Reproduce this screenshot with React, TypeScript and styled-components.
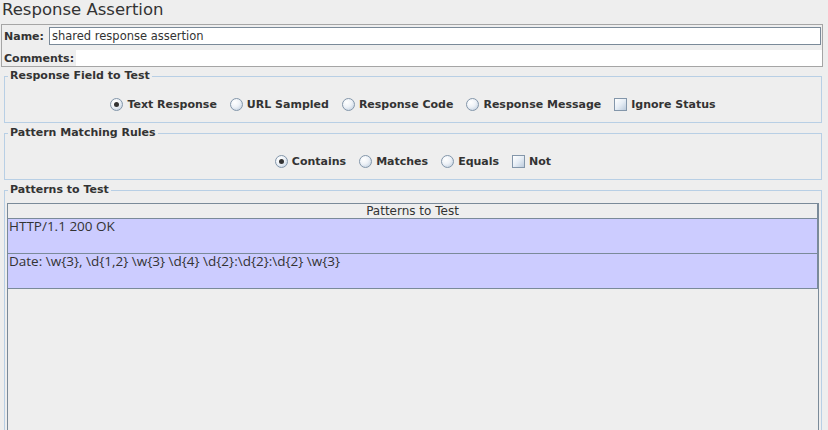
import React from 'react';
import styled, { createGlobalStyle } from 'styled-components';

// Metal-ish look: grey panel, blue-grey lines, bold dialog labels
const GlobalStyle = createGlobalStyle`
  html, body {
    margin: 0;
    padding: 0;
    background: #eeeeee;
  }
  body {
    font-family: "DejaVu Sans", "Liberation Sans", sans-serif;
    color: #333333;
  }
`;

const Page = styled.div`
  width: 828px;
  height: 430px;
  overflow: hidden;
  background: #eeeeee;
  display: flex;
  flex-direction: column;
`;

const Title = styled.h1`
  margin: 0;
  padding-left: 2px;
  height: 24px;
  line-height: 20px;
  font-size: 16.5px;
  font-weight: normal;
  color: #333333;
  flex-shrink: 0;
`;

const InfoBox = styled.div`
  margin: 0 5px 0 1px;
  border: 1px solid #a5a5a5;
  padding-top: 1px;
  display: flex;
  flex-direction: column;
  gap: 4px;
  flex-shrink: 0;
`;

const InfoRow = styled.div<{ $h: number }>`
  display: flex;
  align-items: center;
  height: ${(p) => p.$h}px;
`;

const FieldLabel = styled.span<{ $gap: number }>`
  padding-left: 2px;
  margin-right: ${(p) => p.$gap}px;
  font-size: 11px;
  font-weight: bold;
  color: #333333;
  white-space: nowrap;
`;

const TextInput = styled.div`
  flex: 1;
  height: 16px;
  margin-right: 1px;
  border: 1px solid #7a8a99;
  background: #ffffff;
  padding-left: 2px;
  font-size: 11.5px;
  line-height: 16px;
  color: #333333;
`;

const TextArea = styled.div`
  flex: 1;
  height: 16px;
  background: #ffffff;
`;

const Group = styled.fieldset<{ $top: number; $h?: number }>`
  margin: ${(p) => p.$top}px 6px 0 4px;
  padding: 0;
  border: 1px solid #b8cfe5;
  min-width: 0;
  flex-shrink: 0;
  ${(p) => (p.$h ? `height: ${p.$h}px;` : '')}
`;

const Legend = styled.legend`
  margin-left: 3px;
  padding: 0 2px;
  font-size: 11px;
  font-weight: bold;
  line-height: 14px;
  color: #333333;
`;

const OptionRow = styled.div`
  display: flex;
  justify-content: center;
  align-items: center;
  gap: 13px;
  height: 18px;
  padding: 12px 0 9px;
`;

const Option = styled.label`
  display: inline-flex;
  align-items: center;
  gap: 4px;
  font-size: 11px;
  font-weight: bold;
  color: #333333;
  white-space: nowrap;
`;

const Radio = styled.span<{ $on?: boolean }>`
  width: 11px;
  height: 11px;
  border-radius: 50%;
  border: 1px solid #8396aa;
  background: radial-gradient(circle at 35% 30%, #ffffff 0%, #eef2f7 45%, #b9c9db 100%);
  display: flex;
  align-items: center;
  justify-content: center;
  flex-shrink: 0;

  &::after {
    content: '';
    display: ${(p) => (p.$on ? 'block' : 'none')};
    width: 5px;
    height: 5px;
    border-radius: 50%;
    background: #333333;
  }
`;

const Check = styled.span`
  width: 11px;
  height: 11px;
  border: 1px solid #8396aa;
  background: linear-gradient(135deg, #ffffff 0%, #e6edf5 50%, #bccbdc 100%);
  flex-shrink: 0;
`;

const Pane = styled.div`
  margin: 6px 2px 0 2px;
  height: 260px;
  border: 1px solid #7a8a99;
  background: #eeeeee;
`;

const Grid = styled.div`
  border-right: 1px solid #7a8a99;
`;

const HeaderCell = styled.div`
  height: 14px;
  border-bottom: 1px solid #7a8a99;
  text-align: center;
  font-size: 12px;
  line-height: 14px;
  color: #333333;
`;

// row text is narrower than DejaVu in the braces, Open Sans fits the widths better
const Row = styled.div`
  height: 34px;
  border-bottom: 1px solid #7a8a99;
  background: #ccccff;
  padding-left: 1px;
  font-family: "Open Sans", "DejaVu Sans", sans-serif;
  font-size: 13.5px;
  line-height: 15px;
  color: #333333;
  white-space: pre;
`;

const fieldOptions = [
  { label: 'Text Response', on: true },
  { label: 'URL Sampled' },
  { label: 'Response Code' },
  { label: 'Response Message' },
];

const ruleOptions = [{ label: 'Contains', on: true }, { label: 'Matches' }, { label: 'Equals' }];

const patterns = ['HTTP/1.1 200 OK', 'Date: \\w{3}, \\d{1,2} \\w{3} \\d{4} \\d{2}:\\d{2}:\\d{2} \\w{3}'];

const App: React.FC = () => {
  return (
    <Page>
      <GlobalStyle />
      <Title>Response Assertion</Title>

      <InfoBox>
        <InfoRow $h={20}>
          <FieldLabel $gap={5}>Name:</FieldLabel>
          <TextInput>shared response assertion</TextInput>
        </InfoRow>
        <InfoRow $h={16}>
          <FieldLabel $gap={2}>Comments:</FieldLabel>
          <TextArea />
        </InfoRow>
      </InfoBox>

      <Group $top={2}>
        <Legend>Response Field to Test</Legend>
        <OptionRow>
          {fieldOptions.map((o) => (
            <Option key={o.label}>
              <Radio $on={o.on} />
              {o.label}
            </Option>
          ))}
          <Option>
            <Check />
            Ignore Status
          </Option>
        </OptionRow>
      </Group>

      <Group $top={3}>
        <Legend>Pattern Matching Rules</Legend>
        <OptionRow>
          {ruleOptions.map((o) => (
            <Option key={o.label}>
              <Radio $on={o.on} />
              {o.label}
            </Option>
          ))}
          <Option>
            <Check />
            Not
          </Option>
        </OptionRow>
      </Group>

      <Group $top={3} $h={300}>
        <Legend>Patterns to Test</Legend>
        <Pane>
          <Grid>
            <HeaderCell>Patterns to Test</HeaderCell>
            {patterns.map((p) => (
              <Row key={p}>{p}</Row>
            ))}
          </Grid>
        </Pane>
      </Group>
    </Page>
  );
};

export default App;
